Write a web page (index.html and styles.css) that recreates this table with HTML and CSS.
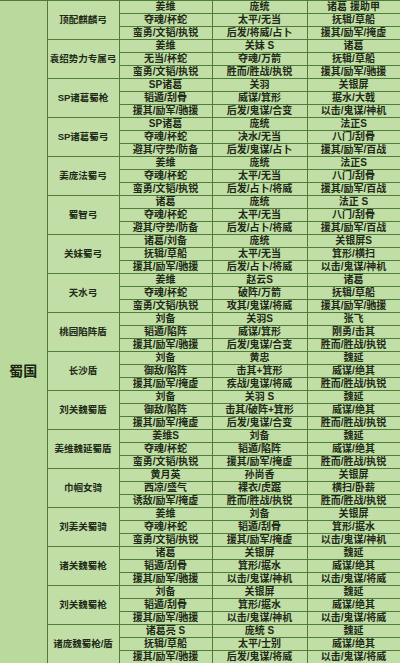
FILE: index.html
```html
<!DOCTYPE html>
<html lang="zh">
<head>
<meta charset="utf-8">
<link rel="stylesheet" href="styles.css">
</head>
<body>
<table class="sheet">
<colgroup><col class="c-k"><col class="c-g"><col class="c-a"><col class="c-b"><col class="c-c"></colgroup>
<tbody>
<tr><td class="kingdom" rowspan="51"><span>蜀国</span></td><td class="grp" rowspan="3">顶配麒麟弓</td><td>姜维</td><td>庞统</td><td>诸葛 援助甲</td></tr>
<tr><td>夺魂/杯蛇</td><td>太平/无当</td><td>抚辑/草船</td></tr>
<tr><td>蛮勇/文韬/执锐</td><td>后发/将威/占卜</td><td>援其/励军/掩虚</td></tr>

<tr><td class="grp" rowspan="3">袁绍势力专属弓</td><td>姜维</td><td>关妹 S</td><td>诸葛</td></tr>
<tr><td>无当/杯蛇</td><td>夺魂/万箭</td><td>抚辑/草船</td></tr>
<tr><td>蛮勇/文韬/执锐</td><td>胜而/胜战/执锐</td><td>援其/励军/驰援</td></tr>

<tr><td class="grp" rowspan="3">SP诸葛蜀枪</td><td>SP诸葛</td><td>关羽</td><td>关银屏</td></tr>
<tr><td>韬遁/刮骨</td><td>威谋/箕形</td><td>据水/大戟</td></tr>
<tr><td>援其/励军/驰援</td><td>后发/鬼谋/合变</td><td>以击/鬼谋/神机</td></tr>

<tr><td class="grp" rowspan="3">SP诸葛蜀弓</td><td>SP诸葛</td><td>庞统</td><td>法正S</td></tr>
<tr><td>夺魂/杯蛇</td><td>决水/无当</td><td>八门/刮骨</td></tr>
<tr><td>避其/守势/防备</td><td>后发/鬼谋/占卜</td><td>援其/励军/百战</td></tr>

<tr><td class="grp" rowspan="3">姜庞法蜀弓</td><td>姜维</td><td>庞统</td><td>法正S</td></tr>
<tr><td>夺魂/杯蛇</td><td>太平/无当</td><td>八门/刮骨</td></tr>
<tr><td>蛮勇/文韬/执锐</td><td>后发/占卜/将威</td><td>援其/励军/百战</td></tr>

<tr><td class="grp" rowspan="3">蜀智弓</td><td>诸葛</td><td>庞统</td><td>法正 S</td></tr>
<tr><td>夺魂/杯蛇</td><td>太平/无当</td><td>八门/刮骨</td></tr>
<tr><td>避其/守势/防备</td><td>后发/占卜/将威</td><td>援其/励军/百战</td></tr>

<tr><td class="grp" rowspan="3">关妹蜀弓</td><td>诸葛/刘备</td><td>庞统</td><td>关银屏S</td></tr>
<tr><td>抚辑/草船</td><td>太平/无当</td><td>箕形/横扫</td></tr>
<tr><td>援其/励军/驰援</td><td>后发/占卜/将威</td><td>以击/鬼谋/神机</td></tr>

<tr><td class="grp" rowspan="3">天水弓</td><td>姜维</td><td>赵云S</td><td>诸葛</td></tr>
<tr><td>夺魂/杯蛇</td><td>破阵/万箭</td><td>抚辑/草船</td></tr>
<tr><td>蛮勇/文韬/执锐</td><td>攻其/鬼谋/将威</td><td>援其/励军/驰援</td></tr>

<tr><td class="grp" rowspan="3">桃园陷阵盾</td><td>刘备</td><td>关羽S</td><td>张飞</td></tr>
<tr><td>韬遁/陷阵</td><td>威谋/箕形</td><td>刚勇/击其</td></tr>
<tr><td>援其/励军/驰援</td><td>后发/鬼谋/合变</td><td>胜而/胜战/执锐</td></tr>

<tr><td class="grp" rowspan="3">长沙盾</td><td>刘备</td><td>黄忠</td><td>魏延</td></tr>
<tr><td>御敌/陷阵</td><td>击其+箕形</td><td>威谋/绝其</td></tr>
<tr><td>援其/励军/掩虚</td><td>疾战/鬼谋/将威</td><td>胜而/胜战/执锐</td></tr>

<tr><td class="grp" rowspan="3">刘关魏蜀盾</td><td>刘备</td><td>关羽 S</td><td>魏延</td></tr>
<tr><td>御敌/陷阵</td><td>击其/破阵+箕形</td><td>威谋/绝其</td></tr>
<tr><td>援其/励军/掩虚</td><td>后发/鬼谋/合变</td><td>胜而/胜战/执锐</td></tr>

<tr><td class="grp" rowspan="3">姜维魏延蜀盾</td><td>姜维S</td><td>刘备</td><td>魏延</td></tr>
<tr><td>夺魂/杯蛇</td><td>韬遁/陷阵</td><td>威谋/绝其</td></tr>
<tr><td>蛮勇/文韬/执锐</td><td>援其/励军/掩虚</td><td>胜而/胜战/执锐</td></tr>

<tr><td class="grp" rowspan="3">巾帼女骑</td><td>黄月英</td><td>孙尚香</td><td>关银屏</td></tr>
<tr><td>西凉/盛气</td><td>裸衣/虎踞</td><td>横扫/卧薪</td></tr>
<tr><td>诱敌/励军/掩虚</td><td>胜而/胜战/执锐</td><td>胜而/胜战/执锐</td></tr>

<tr><td class="grp" rowspan="3">刘姜关蜀骑</td><td>姜维</td><td>刘备</td><td>关银屏</td></tr>
<tr><td>夺魂/杯蛇</td><td>韬遁/刮骨</td><td>箕形/据水</td></tr>
<tr><td>蛮勇/文韬/执锐</td><td>援其/励军/掩虚</td><td>以击/鬼谋/神机</td></tr>

<tr><td class="grp" rowspan="3">诸关魏蜀枪</td><td>诸葛</td><td>关银屏</td><td>魏延</td></tr>
<tr><td>韬遁/刮骨</td><td>箕形/据水</td><td>威谋/绝其</td></tr>
<tr><td>援其/励军/驰援</td><td>以击/鬼谋/神机</td><td>以击/鬼谋/将威</td></tr>

<tr><td class="grp" rowspan="3">刘关魏蜀枪</td><td>刘备</td><td>关银屏</td><td>魏延</td></tr>
<tr><td>韬遁/刮骨</td><td>箕形/据水</td><td>威谋/绝其</td></tr>
<tr><td>援其/励军/驰援</td><td>以击/鬼谋/神机</td><td>以击/鬼谋/将威</td></tr>

<tr><td class="grp" rowspan="3">诸庞魏蜀枪/盾</td><td>诸葛亮 S</td><td>庞统 S</td><td>魏延</td></tr>
<tr><td>抚辑/草船</td><td>太平/士别</td><td>威谋/绝其</td></tr>
<tr><td>援其/励军/驰援</td><td>后发/鬼谋/将威</td><td>以击/鬼谋/将威</td></tr>
</tbody>
</table>
</body>
</html>
```
FILE: styles.css
```css
html, body {
  margin: 0;
  padding: 0;
  background: #bfdda4;
}
.sheet {
  width: 400px;
  table-layout: fixed;
  border-collapse: collapse;
  font-family: "Liberation Sans", "Noto Sans CJK SC", sans-serif;
  font-weight: bold;
  font-size: 10px;
  color: #1e2a16;
  background: #c0dea6;
}
.c-k { width: 47px; }
.c-g { width: 72px; }
.c-a { width: 93px; }
.c-b { width: 95px; }
.c-c { width: 93px; }
.sheet tr { height: 13px; }
.sheet td {
  padding: 0;
  height: 12px;
  line-height: 12px;
  text-align: center;
  white-space: nowrap;
  overflow: hidden;
  border: 1px solid #4e7d37;
}
.sheet td.kingdom {
  border-left: 0;
  background: #b9da9c;
  vertical-align: top;
  padding-top: 360px;
  font-size: 14px;
  line-height: 20px;
  color: #1a2412;
}
.sheet td.grp {
  font-size: 9.5px;
}
```
